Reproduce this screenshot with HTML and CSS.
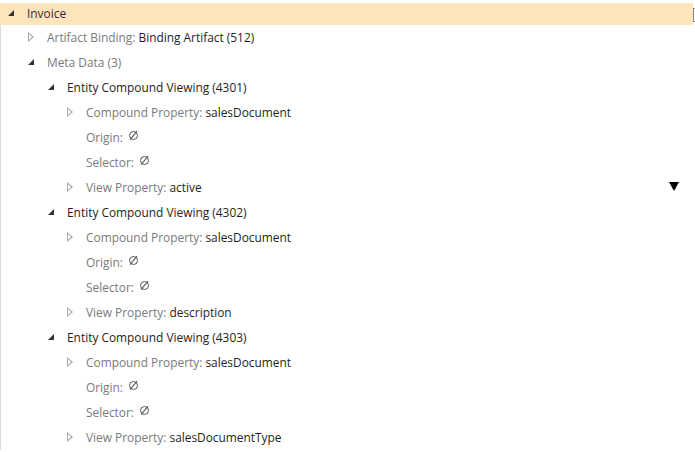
FILE: index.html
```html
<!DOCTYPE html>
<html>
<head>
<meta charset="utf-8">
<link rel="stylesheet" href="styles.css">
</head>
<body>
<div class="tree">
  <div class="row root lvl0">
    <span class="tw open"></span><span class="val root-label">Invoice</span>
    <span class="edge-box"></span>
  </div>
  <div class="body">
    <div class="row lvl1"><span class="tw closed"></span><span class="lbl">Artifact Binding: </span><span class="val">Binding Artifact (512)</span></div>
    <div class="row lvl1"><span class="tw open"></span><span class="lbl">Meta Data (3)</span></div>

    <div class="row lvl2"><span class="tw open"></span><span class="val">Entity Compound Viewing (4301)</span></div>
    <div class="row lvl3"><span class="tw closed"></span><span class="lbl">Compound Property: </span><span class="val">salesDocument</span></div>
    <div class="row lvl3"><span class="tw none"></span><span class="lbl">Origin: </span><span class="null"></span></div>
    <div class="row lvl3"><span class="tw none"></span><span class="lbl">Selector: </span><span class="null"></span></div>
    <div class="row lvl3"><span class="tw closed"></span><span class="lbl">View Property: </span><span class="val">active</span></div>

    <div class="row lvl2"><span class="tw open"></span><span class="val">Entity Compound Viewing (4302)</span></div>
    <div class="row lvl3"><span class="tw closed"></span><span class="lbl">Compound Property: </span><span class="val">salesDocument</span></div>
    <div class="row lvl3"><span class="tw none"></span><span class="lbl">Origin: </span><span class="null"></span></div>
    <div class="row lvl3"><span class="tw none"></span><span class="lbl">Selector: </span><span class="null"></span></div>
    <div class="row lvl3"><span class="tw closed"></span><span class="lbl">View Property: </span><span class="val">description</span></div>

    <div class="row lvl2"><span class="tw open"></span><span class="val">Entity Compound Viewing (4303)</span></div>
    <div class="row lvl3"><span class="tw closed"></span><span class="lbl">Compound Property: </span><span class="val">salesDocument</span></div>
    <div class="row lvl3"><span class="tw none"></span><span class="lbl">Origin: </span><span class="null"></span></div>
    <div class="row lvl3"><span class="tw none"></span><span class="lbl">Selector: </span><span class="null"></span></div>
    <div class="row lvl3"><span class="tw closed"></span><span class="lbl">View Property: </span><span class="val">salesDocumentType</span></div>
  </div>
  <span class="dropdown-caret"></span>
</div>
</body>
</html>
```
FILE: styles.css
```css
html, body {
  margin: 0;
  padding: 0;
  background: #fff;
  overflow: hidden;
}
.tree {
  position: relative;
  width: 695px;
  height: 452px;
  padding-top: 3px;
  box-sizing: border-box;
  font-family: "Open Sans", "Noto Sans", sans-serif;
  font-size: 11.9px;
}
.body {
  border-left: 1px solid #dcdcdc;
}
.row {
  height: 25px;
  box-sizing: border-box;
  padding-bottom: 2px;
  display: flex;
  align-items: center;
  white-space: nowrap;
}
.root {
  height: 22px;
  padding-bottom: 3px;
  width: 693px;
  background: #fde5bb;
  position: relative;
}
.lvl0 { padding-left: 8px; }
.body .lvl1 { padding-left: 27px; }
.body .lvl2 { padding-left: 47px; }
.body .lvl3 { padding-left: 66px; }
.tw {
  width: 19px;
  height: 10px;
  flex: none;
  position: relative;
}
.tw.open::before {
  content: "";
  position: absolute;
  left: 0;
  top: 2px;
  width: 0;
  height: 0;
  border-style: solid;
  border-width: 0 0 6px 6px;
  border-color: transparent transparent #333 transparent;
}
.tw.closed::before {
  content: "";
  position: absolute;
  left: 0;
  top: 0;
  width: 0;
  height: 0;
  border-style: solid;
  border-width: 5px 0 5px 6px;
  border-color: transparent transparent transparent #a8a8a8;
}
.tw.closed::after {
  content: "";
  position: absolute;
  left: 1px;
  top: 2px;
  width: 0;
  height: 0;
  border-style: solid;
  border-width: 3px 0 3px 3.5px;
  border-color: transparent transparent transparent #fff;
}
.lbl { color: #7a7a7a; white-space: pre; }
.val { color: #1e1e1e; }
.root-label { color: #3c1f3c; }
.null {
  width: 9px;
  height: 9px;
  margin-left: 3px;
  position: relative;
  top: -1px;
  box-sizing: border-box;
  border: 1.3px solid #555;
  border-radius: 50%;
}
.null::after {
  content: "";
  position: absolute;
  left: 3px;
  top: -2px;
  width: 1.3px;
  height: 11px;
  background: #555;
  transform: rotate(40deg);
}
.edge-box {
  position: absolute;
  left: 693px;
  top: 5px;
  width: 6px;
  height: 12px;
  border: 1px solid #888;
  background: #fff;
}
.dropdown-caret {
  position: absolute;
  left: 669px;
  top: 182px;
  width: 0;
  height: 0;
  border-style: solid;
  border-width: 9px 5.5px 0 5.5px;
  border-color: #000 transparent transparent transparent;
}
```
